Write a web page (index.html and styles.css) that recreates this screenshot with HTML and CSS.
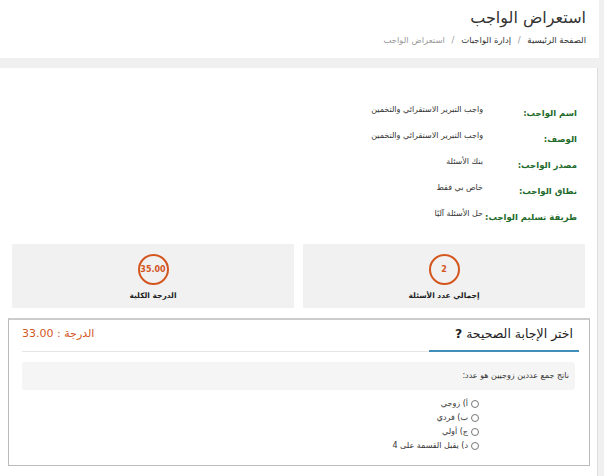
FILE: index.html
```html
<!DOCTYPE html>
<html lang="ar" dir="rtl">
<head>
  <meta charset="UTF-8" />
  <title>استعراض الواجب</title>
  <link rel="stylesheet" href="styles.css">
</head>
<body>

  <header class="page-head">
    <h1>استعراض الواجب</h1>
    <div class="crumbs">
      <a href="#">الصفحة الرئيسية</a>
      <span class="sep">/</span>
      <a href="#">إدارة الواجبات</a>
      <span class="sep">/</span>
      <span class="current">استعراض الواجب</span>
    </div>
  </header>

  <div class="content">
    <div class="info">
      <div class="label">اسم الواجب:</div>
      <div class="value">واجب التبرير الاستقرائي والتخمين</div>
      <div class="label">الوصف:</div>
      <div class="value">واجب التبرير الاستقرائي والتخمين</div>
      <div class="label">مصدر الواجب:</div>
      <div class="value">بنك الأسئلة</div>
      <div class="label">نطاق الواجب:</div>
      <div class="value">خاص بي فقط</div>
      <div class="label">طريقة تسليم الواجب:</div>
      <div class="value">حل الأسئلة آليًا</div>
    </div>

    <div class="stats">
      <div class="stat">
        <div class="circle">2</div>
        <div class="stat-name">إجمالي عدد الأسئلة</div>
      </div>
      <div class="stat">
        <div class="circle">35.00</div>
        <div class="stat-name">الدرجة الكلية</div>
      </div>
    </div>

    <div class="question">
      <div class="q-head">
        <h2>اختر الإجابة الصحيحة <b>?</b></h2>
        <span class="grade">الدرجة : 33.00</span>
      </div>
      <div class="q-text">ناتج جمع عددين زوجيين هو عدد:</div>
      <div class="options">
        <label><input type="radio" name="q1"> أ) زوجي</label>
        <label><input type="radio" name="q1"> ب) فردي</label>
        <label><input type="radio" name="q1"> ج) أولي</label>
        <label><input type="radio" name="q1"> د) يقبل القسمة على 4</label>
      </div>
    </div>
  </div>

</body>
</html>
```

FILE: styles.css
```css
:root {
  --orange: #d4561f;
  --green: #1f6b2c;
  --grey-box: #f1f1f1;
  --line: #d0d0d0;
}

* {
  box-sizing: border-box;
  margin: 0;
  padding: 0;
  font-family: 'DejaVu Sans', sans-serif;
}

body {
  background-color: #f0f0f0;
  color: #333;
}

.page-head {
  background-color: white;
  margin-right: 5px;
  height: 58px;
  padding: 6px 13px 0 0;
}

.page-head h1 {
  font-size: 16px;
  font-weight: normal;
  color: #333;
  line-height: 24px;
}

.crumbs {
  margin-top: 3px;
  font-size: 8.5px;
  line-height: 14px;
  color: #999;
}

.crumbs a {
  color: #333;
  text-decoration: none;
}

.crumbs .sep {
  margin: 0 4px;
  color: #999;
}

.content {
  background-color: white;
  margin: 10px 6px 0 0;
  border-right: 1px solid #ddd;
  min-height: 410px;
  padding: 35px 0 6px;
}

.info {
  display: grid;
  grid-template-columns: 94px 1fr;
  grid-auto-rows: 26px;
  padding-right: 20px;
  margin-bottom: 11px;
}

.info .label {
  color: var(--green);
  font-size: 8.5px;
  font-weight: bold;
  padding-top: 3px;
  line-height: 14px;
  white-space: nowrap;
}

.info .value {
  font-size: 8px;
  line-height: 14px;
  white-space: nowrap;
}

.stats {
  display: flex;
  gap: 9px;
  padding: 0 12px;
}

.stat {
  flex: 1;
  background-color: var(--grey-box);
  height: 64px;
  display: flex;
  flex-direction: column;
  align-items: center;
  padding-top: 10px;
}

.circle {
  width: 31px;
  height: 31px;
  border: 2px solid var(--orange);
  border-radius: 50%;
  color: var(--orange);
  font-size: 8px;
  font-weight: bold;
  display: flex;
  align-items: center;
  justify-content: center;
}

.stat-name {
  margin-top: 5px;
  font-size: 7.5px;
  line-height: 12px;
  font-weight: bold;
  color: #222;
}

.question {
  margin: 10px 7px 0 8px;
  border: 1px solid #bbb;
  border-top: 2px solid #ccc;
  padding: 0 14px 12px 13px;
}

.q-head {
  display: flex;
  justify-content: space-between;
  align-items: flex-end;
  border-bottom: 1px solid #e6e6e6;
  margin: 0 -4px 10px 0;
  height: 32px;
}

.q-head h2 {
  font-size: 12.5px;
  line-height: 16px;
  font-weight: normal;
  color: #222;
  padding: 6px 6px 8px 26px;
  border-bottom: 2px solid #3f8fb8;
  margin-bottom: -1px;
}

.q-head h2 b {
  font-weight: bold;
}

.grade {
  color: var(--orange);
  font-size: 11px;
  line-height: 16px;
  padding-bottom: 9px;
}

.q-text {
  background-color: #f5f5f5;
  border-radius: 3px;
  height: 28px;
  line-height: 28px;
  padding-right: 6px;
  font-size: 8px;
}

.options {
  display: flex;
  flex-direction: column;
  padding: 7px 96px 0 0;
}

.options label {
  font-size: 8px;
  height: 14px;
  line-height: 14px;
  display: flex;
  align-items: center;
  gap: 3px;
}

.options input {
  width: 8px;
  height: 8px;
  margin: 0;
  accent-color: #999;
}
```
